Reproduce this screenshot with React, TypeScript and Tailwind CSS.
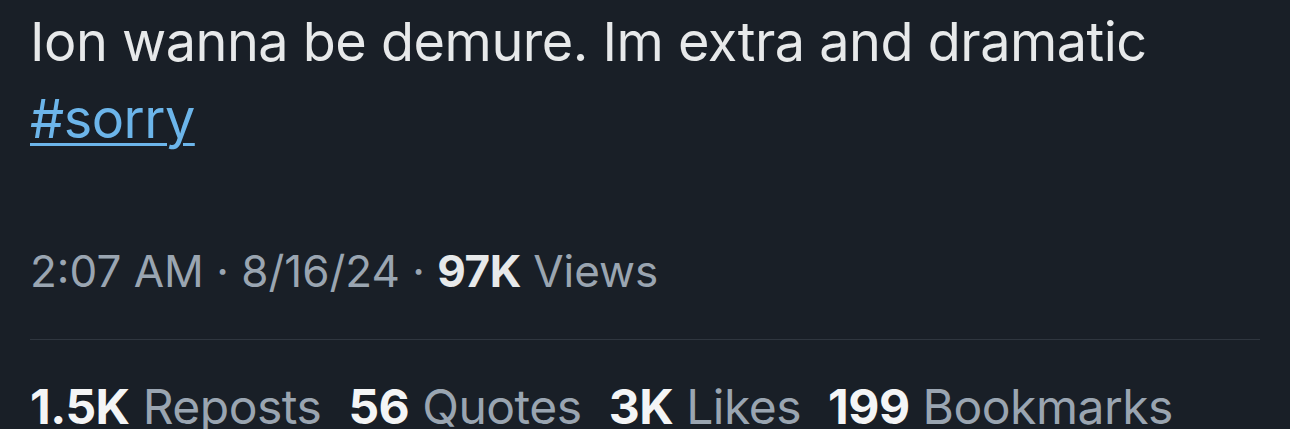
export default function App() {
  return (
    <div className="h-[429px] w-[1290px] overflow-hidden bg-[#191f27] font-['Inter',sans-serif] text-[#e7e9ea]">
      <div className="px-[30px]">
        <p className="pt-[3px] text-[54px] leading-[77px] tracking-[-0.5px]">
          Ion wanna be demure. Im extra and dramatic
          <br />
          <a className="text-[#6cb5ea] underline decoration-[3px] underline-offset-[5px]">#sorry</a>
        </p>
        <div className="mt-[90px] text-[44px] leading-[48px] tracking-[0px] text-[#9aa5b1]">
          2:07 AM · 8/16/24 · <span className="font-bold tracking-[-0.5px] text-[#e7e9ea]">97K</span> Views
        </div>
        <div className="mt-[44px] h-px w-[1230px] bg-[#2f363f]" />
        <div className="mt-[37px] flex gap-[27px] text-[48px] leading-[60px] tracking-[-0.5px] text-[#9aa5b1]">
          <span><span className="font-bold text-[#f4f5f6]">1.5K</span> Reposts</span>
          <span><span className="font-bold text-[#f4f5f6]">56</span> Quotes</span>
          <span><span className="font-bold text-[#f4f5f6]">3K</span> Likes</span>
          <span><span className="font-bold text-[#f4f5f6]">199</span> Bookmarks</span>
        </div>
      </div>
    </div>
  );
}
